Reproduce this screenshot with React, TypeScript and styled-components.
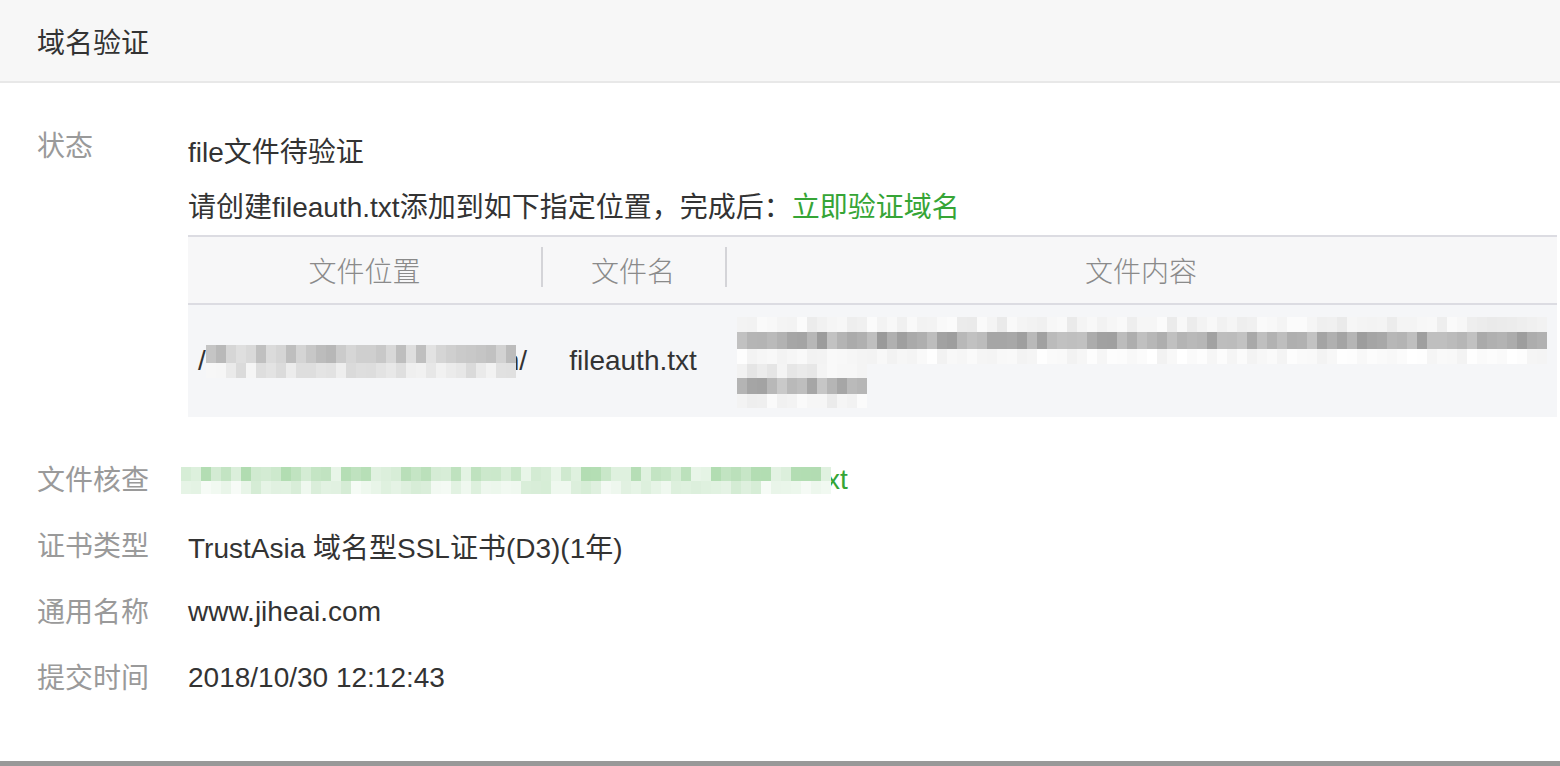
import { FC } from 'react';
import styled, { createGlobalStyle } from 'styled-components';

const palette = {
    text: '#333333',
    label: '#9a9a9a',
    head: '#8a8a8a',
    green: '#36a536',
    headerBg: '#f7f7f7',
    tableHead: '#f7f7f8',
    tableBody: '#f5f6f8',
    line: '#dcdce2',
};

const GlobalStyle = createGlobalStyle`
    html, body {
        margin: 0;
        padding: 0;
        background: #ffffff;
    }
    body {
        font-family: "Liberation Sans", "Noto Sans CJK SC", sans-serif;
        color: ${palette.text};
    }
`;

type Rgb = [number, number, number];

interface IBand {
    h: number;
    lo: number;
    hi: number;
}

interface IMosaicProps {
    seed: number;
    cells: number;
    base: Rgb;
    rows: IBand[];
    cell?: number;
}

// pixelated blocks standing in for the blurred-out text
const seeded = (seed: number) => {
    let s = seed;
    return () => {
        s = (s * 9301 + 49297) % 233280;
        return s / 233280;
    };
};

const mix = (base: Rgb, t: number) =>
    `rgb(${base.map((c) => Math.round(255 - (255 - c) * t)).join(',')})`;

const Mosaic: FC<IMosaicProps> = ({ seed, cells, base, rows, cell = 10 }) => {
    const rnd = seeded(seed);
    return (
        <MosaicBox style={{ width: cells * cell }}>
            {rows.map((band, i) => {
                const stops = Array.from({ length: cells }, (_, k) => {
                    const t = band.lo + rnd() * (band.hi - band.lo);
                    return `${mix(base, t)} ${k * cell}px ${(k + 1) * cell}px`;
                });
                return (
                    <Band
                        key={i}
                        $h={band.h}
                        style={{ background: `linear-gradient(to right, ${stops.join(', ')})` }}
                    />
                );
            })}
        </MosaicBox>
    );
};

const gray: Rgb = [120, 120, 120];
const green: Rgb = [110, 190, 110];

const App: FC = () => {
    return (
        <Page>
            <GlobalStyle />
            <Header>域名验证</Header>
            <Body>
                <StatusRow>
                    <Label $shift={-6}>状态</Label>
                    <Value>
                        <Line>file文件待验证</Line>
                        <Line>
                            请创建fileauth.txt添加到如下指定位置，完成后：
                            <Link>立即验证域名</Link>
                        </Line>
                        <Table>
                            <HeadCell>文件位置</HeadCell>
                            <HeadCell $divider>文件名</HeadCell>
                            <HeadCell $divider>文件内容</HeadCell>
                            <PathCell>
                                /
                                <Covered $overlap={12}>
                                    <Mosaic
                                        seed={11}
                                        cells={31}
                                        base={gray}
                                        rows={[
                                            { h: 18, lo: 0.2, hi: 0.55 },
                                            { h: 15, lo: 0.05, hi: 0.3 },
                                        ]}
                                    />
                                </Covered>
                                n/
                            </PathCell>
                            <NameCell>fileauth.txt</NameCell>
                            <ContentCell>
                                <Mosaic
                                    seed={7}
                                    cells={81}
                                    base={gray}
                                    rows={[
                                        { h: 15, lo: 0.02, hi: 0.16 },
                                        { h: 17, lo: 0.45, hi: 0.75 },
                                        { h: 15, lo: 0, hi: 0.1 },
                                    ]}
                                />
                                <Mosaic
                                    seed={29}
                                    cells={13}
                                    base={gray}
                                    rows={[
                                        { h: 14, lo: 0.04, hi: 0.2 },
                                        { h: 16, lo: 0.4, hi: 0.7 },
                                        { h: 14, lo: 0.03, hi: 0.16 },
                                    ]}
                                />
                            </ContentCell>
                        </Table>
                    </Value>
                </StatusRow>

                <Row>
                    <Label>文件核查</Label>
                    <CheckValue>
                        <Covered $overlap={5}>
                            <Mosaic
                                seed={3}
                                cells={65}
                                base={green}
                                rows={[
                                    { h: 14, lo: 0.15, hi: 0.55 },
                                    { h: 13, lo: 0.05, hi: 0.3 },
                                ]}
                            />
                        </Covered>
                        <Link>xt</Link>
                    </CheckValue>
                </Row>
                <Row>
                    <Label>证书类型</Label>
                    <RowValue>TrustAsia 域名型SSL证书(D3)(1年)</RowValue>
                </Row>
                <Row>
                    <Label>通用名称</Label>
                    <RowValue>www.jiheai.com</RowValue>
                </Row>
                <Row>
                    <Label>提交时间</Label>
                    <RowValue>2018/10/30 12:12:43</RowValue>
                </Row>
            </Body>
        </Page>
    );
};

const Page = styled.div`
    box-sizing: border-box;
    width: 1560px;
    height: 766px;
    display: flex;
    flex-direction: column;
    border-bottom: 5px solid #999999;
    overflow: hidden;
`;

const Header = styled.div`
    height: 81px;
    padding-left: 37px;
    display: flex;
    align-items: center;
    font-size: 28px;
    color: ${palette.text};
    background: ${palette.headerBg};
    border-bottom: 2px solid #e8e8e8;
`;

const Body = styled.div`
    padding: 42px 3px 0 37px;
    display: flex;
    flex-direction: column;
    font-size: 28px;
`;

const StatusRow = styled.div`
    display: flex;
    align-items: flex-start;
    margin-bottom: 30px;
`;

const Row = styled.div`
    display: flex;
    align-items: center;
    height: 66px;
`;

const Label = styled.div<{ $shift?: number }>`
    width: 151px;
    flex-shrink: 0;
    color: ${palette.label};
    line-height: 55px;
    margin-top: ${({ $shift }) => $shift || 0}px;
`;

const Value = styled.div`
    flex: 1;
    display: flex;
    flex-direction: column;
`;

const Line = styled.div`
    line-height: 55px;
    white-space: nowrap;
`;

const Link = styled.span`
    color: ${palette.green};
    cursor: pointer;
`;

const Table = styled.div`
    display: grid;
    grid-template-columns: 353px 184px 1fr;
    border-top: 2px solid ${palette.line};
`;

const HeadCell = styled.div<{ $divider?: boolean }>`
    position: relative;
    height: 66px;
    display: flex;
    align-items: center;
    justify-content: center;
    background: ${palette.tableHead};
    border-bottom: 2px solid ${palette.line};
    color: ${palette.head};
    font-weight: 300;

    &::before {
        content: '';
        display: ${({ $divider }) => ($divider ? 'block' : 'none')};
        position: absolute;
        left: 0;
        top: 10px;
        width: 2px;
        height: 40px;
        background: #d4d4d8;
    }
`;

const BodyCell = styled.div`
    height: 112px;
    background: ${palette.tableBody};
    display: flex;
    align-items: center;
`;

const PathCell = styled(BodyCell)`
    padding-left: 10px;
`;

const NameCell = styled(BodyCell)`
    justify-content: center;
`;

const ContentCell = styled(BodyCell)`
    flex-direction: column;
    align-items: flex-start;
    padding: 12px 0 0 12px;
    box-sizing: border-box;
`;

const Covered = styled.span<{ $overlap: number }>`
    position: relative;
    z-index: 1;
    display: inline-flex;
    margin-right: -${({ $overlap }) => $overlap}px;
`;

const MosaicBox = styled.div`
    display: flex;
    flex-direction: column;
    flex-shrink: 0;
`;

const Band = styled.div<{ $h: number }>`
    height: ${({ $h }) => $h}px;
`;

const RowValue = styled.div`
    white-space: nowrap;
`;

const CheckValue = styled.div`
    display: flex;
    align-items: center;
    margin-left: -7px;
`;

export default App;
